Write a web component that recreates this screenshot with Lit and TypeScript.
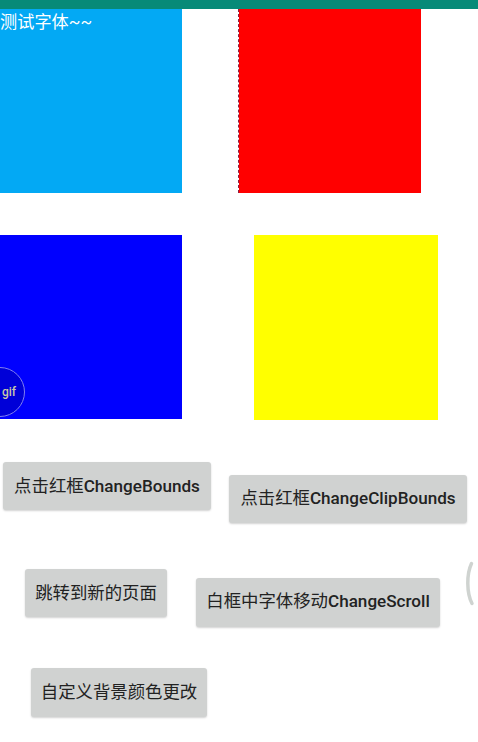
import { LitElement, html, css } from "lit";
import { customElement } from "lit/decorators.js";

@customElement("app-root")
export class AppRoot extends LitElement {
  static styles = css`
    :host {
      display: block;
      position: relative;
      width: 478px;
      height: 742px;
      overflow: hidden;
      background: #fff;
      font-family: Roboto, "Noto Sans CJK SC", sans-serif;
    }
    .bar { height: 9px; background: #078a78; }
    .row { display: flex; align-items: flex-start; }
    .squares-a { height: 184px; }
    .squares-b { height: 185px; margin-top: 42px; }
    .sq { height: 184px; flex: none; }
    .sky {
      width: 182px;
      background: #03a9f4;
      color: #fff;
      font-size: 17.2px;
      line-height: 27px;
    }
    .red {
      width: 183px;
      margin-left: 56px;
      background: #f00;
      border-left: 1px dashed #8a1f45;
      background-clip: padding-box;
      box-sizing: border-box;
    }
    .blue { width: 182px; background: #00f; }
    .yellow { width: 184px; margin-left: 72px; background: #ff0; height: 185px; }
    .btn {
      flex: none;
      box-sizing: border-box;
      height: 48px;
      display: flex;
      align-items: center;
      justify-content: center;
      padding-bottom: 3px;
      border-radius: 3px;
      background: #d0d2d1;
      box-shadow: 0 1px 2px rgba(0, 0, 0, 0.18);
      color: #222;
      font-size: 17.4px;
      white-space: nowrap;
    }
    .lat { font-weight: 500; font-size: 17.1px; }
    .r1 { margin-top: 42px; height: 61px; padding-left: 3px; }
    .r1 .btn:nth-child(1) { width: 208px; }
    .r1 .btn:nth-child(2) { width: 238px; margin-left: 18px; margin-top: 13px; padding-bottom: 5px; }
    .r2 { margin-top: 46px; height: 58px; padding-left: 25px; }
    .r2 .btn:nth-child(1) { width: 142px; }
    .r2 .btn:nth-child(2) { width: 244px; margin-left: 29px; margin-top: 9px; height: 49px; padding-bottom: 7px; }
    .r3 { margin-top: 41px; padding-left: 31px; }
    .r3 .btn { width: 176px; height: 49px; padding-bottom: 5px; }
    .gif {
      position: absolute;
      left: -25px;
      top: 367px;
      width: 50px;
      height: 50px;
      box-sizing: border-box;
      border: 1px solid #7f7ff0;
      border-radius: 50%;
      background: #0000d8;
      color: #c9c9a8;
      font-size: 12px;
      font-weight: 500;
      line-height: 48px;
      padding-left: 26px;
    }
    .handle { position: absolute; left: 465px; top: 560px; }
  `;

  render() {
    return html`
      <div class="bar"></div>
      <div class="row squares-a">
        <div class="sq sky">测试字体~~</div>
        <div class="sq red"></div>
      </div>
      <div class="row squares-b">
        <div class="sq blue"></div>
        <div class="sq yellow"></div>
      </div>
      <div class="row r1">
        <div class="btn"><span>点击红框<span class="lat">ChangeBounds</span></span></div>
        <div class="btn"><span>点击红框<span class="lat">ChangeClipBounds</span></span></div>
      </div>
      <div class="row r2">
        <div class="btn">跳转到新的页面</div>
        <div class="btn"><span>白框中字体移动<span class="lat">ChangeScroll</span></span></div>
      </div>
      <div class="row r3">
        <div class="btn">自定义背景颜色更改</div>
      </div>
      <div class="gif">gif</div>
      <svg class="handle" width="10" height="48" viewBox="0 0 10 48" fill="none">
        <path d="M6.5 3.5 C1.5 14 1.5 33 7 43.5" stroke="#cfd3d0" stroke-width="3.5" stroke-linecap="round" />
      </svg>
    `;
  }
}
